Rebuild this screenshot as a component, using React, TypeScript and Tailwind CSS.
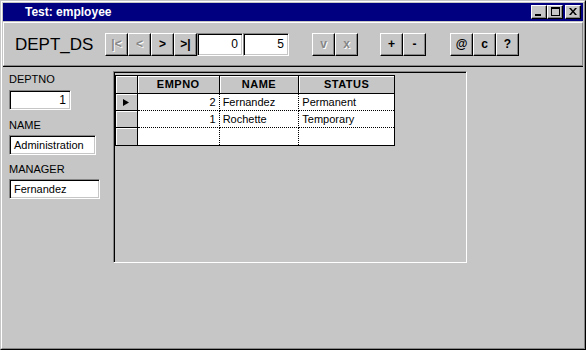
import React from "react";

const btn =
  "flex items-center justify-center w-[23px] h-[23px] bg-[#c6c6c6] border border-t-white border-l-white border-r-black border-b-black shadow-[inset_-1px_-1px_0_#868686] text-[12px] font-bold leading-none";
const dis = "text-[#868686] [text-shadow:1px_1px_0_#fff]";
const sunken =
  "bg-white border border-t-[#868686] border-l-[#868686] border-r-white border-b-white shadow-[inset_1px_1px_0_#000,inset_-1px_-1px_0_#c6c6c6]";

function CapBtn({ children }: { children: React.ReactNode }) {
  return (
    <div className="w-[16px] h-[14px] bg-[#c6c6c6] border border-t-white border-l-white border-r-black border-b-black shadow-[inset_-1px_-1px_0_#868686] flex items-center justify-center">
      {children}
    </div>
  );
}

const cols = [22, 82, 80, 95];

function HeaderRow() {
  const names = ["", "EMPNO", "NAME", "STATUS"];
  return (
    <div className="flex h-[18px]">
      {names.map((n, i) => (
        <div
          key={i}
          style={{ width: cols[i] }}
          className={`h-full bg-[#c6c6c6] border-b border-black shadow-[inset_1px_1px_0_#fff] flex items-center justify-center font-bold text-[11px] tracking-[0.5px] ${i < 3 ? "border-r" : ""}`}
        >
          {n}
        </div>
      ))}
    </div>
  );
}

function DataRow({ cells, current, last }: { cells: string[]; current?: boolean; last?: boolean }) {
  return (
    <div className="flex h-[17px]">
      <div
        style={{ width: cols[0] }}
        className={`h-full bg-[#c6c6c6] border-r border-black shadow-[inset_1px_1px_0_#fff] flex items-center justify-center ${last ? "" : "border-b"}`}
      >
        {current && (
          <svg width="6" height="7" viewBox="0 0 6 7">
            <polygon points="0,0 6,3.5 0,7" fill="#000" />
          </svg>
        )}
      </div>
      {cells.map((c, i) => (
        <div
          key={i}
          style={{ width: cols[i + 1] }}
          className={`h-full bg-white flex items-center text-[11px] border-black ${last ? "" : "border-b border-dotted"} ${i < 2 ? "border-r border-dotted" : ""} ${i === 0 ? "justify-end pr-[3px]" : "pl-[3px]"}`}
        >
          {c}
        </div>
      ))}
    </div>
  );
}

export default function App() {
  return (
    <div
      className="w-[586px] h-[350px] bg-[#c6c6c6] border border-t-[#c6c6c6] border-l-[#c6c6c6] border-r-black border-b-black text-black"
      style={{ fontFamily: '"Liberation Sans", Arial, sans-serif' }}
    >
      <div className="w-full h-full border border-t-white border-l-white border-r-[#868686] border-b-[#868686] p-[1px] flex flex-col">
        {/* title bar */}
        <div className="h-[18px] bg-[#000080] flex items-center pl-[22px] pr-[2px] shrink-0">
          <span className="text-white font-bold text-[12px] leading-none">Test: employee</span>
          <div className="ml-auto flex items-center">
            <CapBtn>
              <div className="w-[6px] h-[2px] bg-black mt-[6px] -ml-[2px]" />
            </CapBtn>
            <CapBtn>
              <div className="w-[9px] h-[9px] border border-black border-t-2 -mt-[1px]" />
            </CapBtn>
            <div className="w-[2px]" />
            <CapBtn>
              <svg width="8" height="7" viewBox="0 0 8 7" className="-mt-[1px]">
                <path d="M0 0h2l2 2.5L6 0h2L5 3.5 8 7H6L4 4.5 2 7H0l3-3.5z" fill="#000" />
              </svg>
            </CapBtn>
          </div>
        </div>
        <div className="h-[1px] shrink-0" />
        {/* toolbar */}
        <div className="h-[44px] shrink-0 border border-t-white border-l-white border-r-[#868686] border-b-[#868686] shadow-[0_1px_0_#000] flex items-center pl-[11px]">
          <span className="text-[17px] leading-none w-[90px]">DEPT_DS</span>
          <div className="flex">
            <div className={btn}>
              <span className={dis}>|&lt;</span>
            </div>
            <div className={btn}>
              <span className={dis}>&lt;</span>
            </div>
            <div className={btn}>&gt;</div>
            <div className={btn}>&gt;|</div>
            <div className={`${sunken} w-[46px] h-[23px] flex items-center justify-end pr-[4px] text-[12px]`}>0</div>
            <div className={`${sunken} w-[46px] h-[23px] flex items-center justify-end pr-[4px] text-[12px]`}>5</div>
          </div>
          <div className="flex ml-[23px]">
            <div className={btn}>
              <span className={dis}>v</span>
            </div>
            <div className={btn}>
              <span className={dis}>x</span>
            </div>
          </div>
          <div className="flex ml-[22px]">
            <div className={btn}>+</div>
            <div className={btn}>-</div>
          </div>
          <div className="flex ml-[24px]">
            <div className={btn}>@</div>
            <div className={btn}>c</div>
            <div className={btn}>?</div>
          </div>
        </div>
        {/* body */}
        <div className="flex pl-[6px] pt-[5px]">
          <div className="w-[104px] flex flex-col text-[11px]">
            <div className="leading-[14px] mt-[1px]">DEPTNO</div>
            <div className={`${sunken} w-[62px] h-[20px] mt-[4px] flex items-center justify-end pr-[4px] text-[12px]`}>1</div>
            <div className="leading-[14px] mt-[8px]">NAME</div>
            <div className={`${sunken} w-[87px] h-[20px] mt-[3px] flex items-center pl-[4px]`}>Administration</div>
            <div className="leading-[14px] mt-[7px]">MANAGER</div>
            <div className={`${sunken} w-[91px] h-[20px] mt-[3px] flex items-center pl-[4px]`}>Fernandez</div>
          </div>
          <div className="w-[354px] h-[192px] border border-t-[#868686] border-l-[#868686] border-r-white border-b-white shadow-[inset_1px_1px_0_#000] pl-[1px] pt-[3px]">
            <div className="w-[280px] border border-black">
              <HeaderRow />
              <DataRow cells={["2", "Fernandez", "Permanent"]} current />
              <DataRow cells={["1", "Rochette", "Temporary"]} />
              <DataRow cells={["", "", ""]} last />
            </div>
          </div>
        </div>
      </div>
    </div>
  );
}
